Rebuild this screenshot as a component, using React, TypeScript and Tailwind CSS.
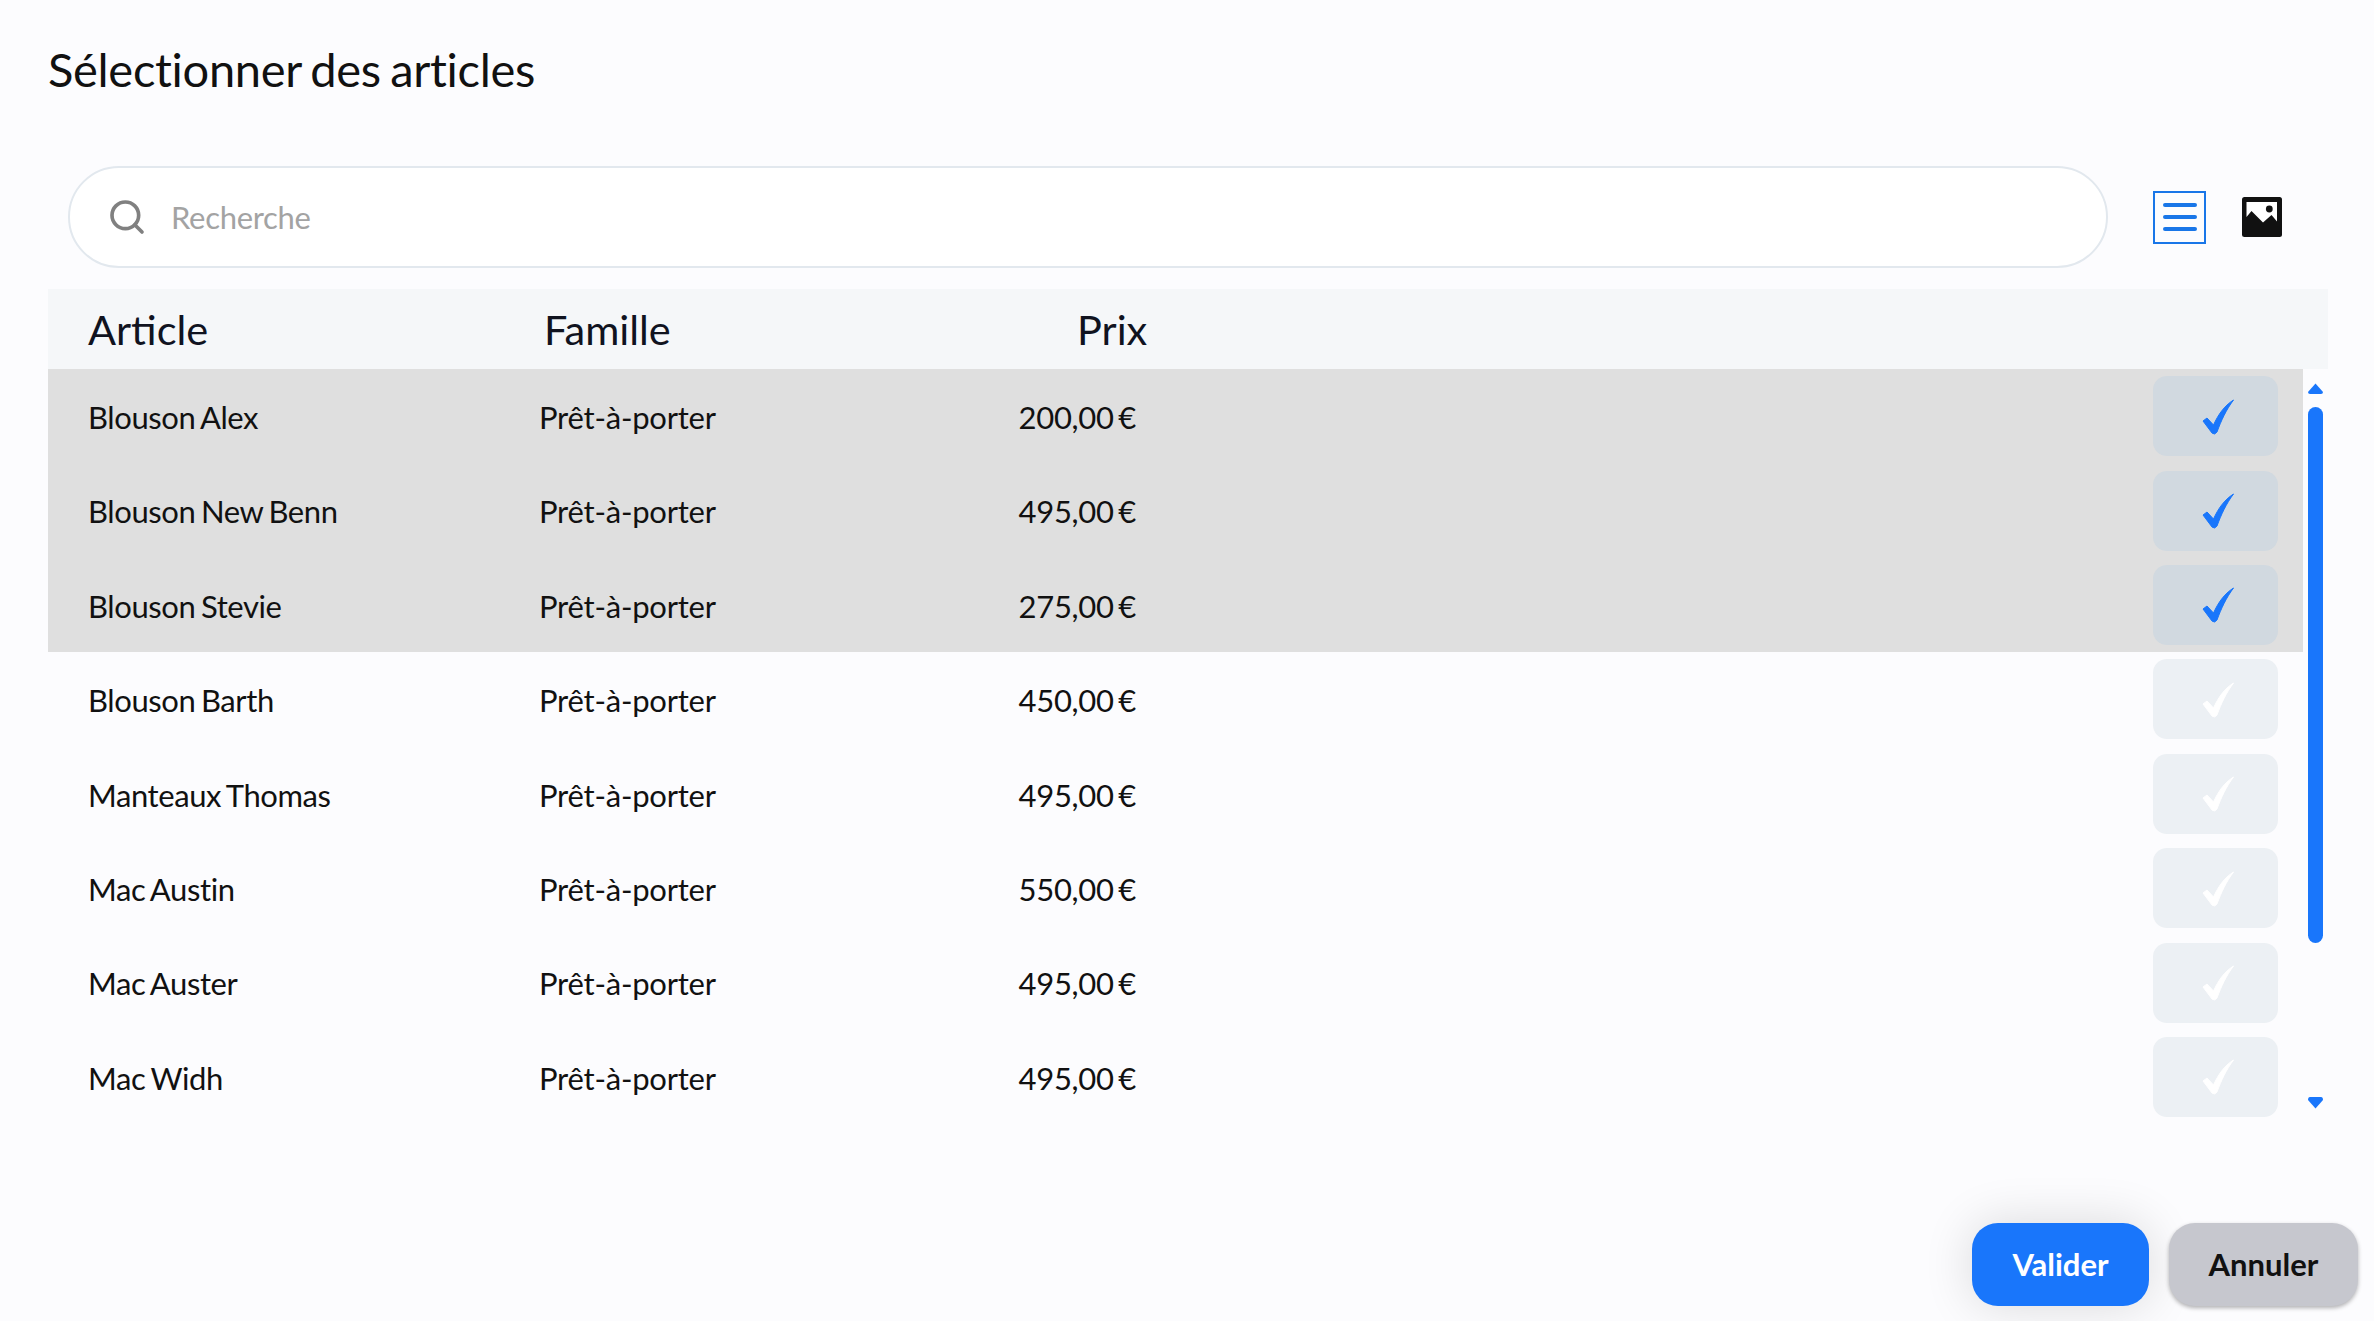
import { Search } from 'lucide-react'

const rows = [
  { name: 'Blouson Alex', price: '200,00 €', selected: true },
  { name: 'Blouson New Benn', price: '495,00 €', selected: true },
  { name: 'Blouson Stevie', price: '275,00 €', selected: true },
  { name: 'Blouson Barth', price: '450,00 €', selected: false },
  { name: 'Manteaux Thomas', price: '495,00 €', selected: false },
  { name: 'Mac Austin', price: '550,00 €', selected: false },
  { name: 'Mac Auster', price: '495,00 €', selected: false },
  { name: 'Mac Widh', price: '495,00 €', selected: false },
]

function Check({ color }: { color: string }) {
  return (
    <svg className="ml-[4px] mt-[2px]" width="34" height="37" viewBox="0 0 34 37" fill="none">
      <path d="M2 22 L6 19 L12.5 26 C17 16 23 7 32.5 1 C25 11 20 22 16 33 Q13.5 36.5 11 34 Z" fill={color} stroke={color} strokeWidth="1" strokeLinejoin="round" />
    </svg>
  )
}

function Row({ name, price, selected }: { name: string; price: string; selected: boolean }) {
  return (
    <div className={`flex items-center h-[94.4px] pl-10 pr-[25px] text-[31px] text-[#111] ${selected ? 'bg-[#dfdfdf]' : ''}`}>
      <div className="w-[451px] shrink-0 pt-[2px] tracking-[-0.4px] [word-spacing:-2px]">{name}</div>
      <div className="w-[300px] shrink-0 pt-[2px] tracking-[-0.23px]">Prêt-à-porter</div>
      <div className="w-[297px] shrink-0 text-right pt-[2px] tracking-[-0.3px] [word-spacing:-3px]">{price}</div>
      <div className="flex-1" />
      <div className={`w-[125px] h-[80px] rounded-[14px] flex items-center justify-center ${selected ? 'bg-[#d1d9e0]' : 'bg-[#ecf0f4]'}`}>
        <Check color={selected ? '#1976fb' : '#ffffff'} />
      </div>
    </div>
  )
}

export default function App() {
  return (
    <div className="w-[2374px] h-[1321px] bg-[#fcfcfe] flex flex-col overflow-hidden font-['Lato',sans-serif]">
      <h1 className="pl-12 pt-[40px] h-[166px] text-[47px] leading-[58px] text-[#111] font-normal tracking-[-0.3px] [word-spacing:-2.5px]">Sélectionner des articles</h1>

      <div className="flex items-center pl-[68px]">
        <div className="w-[2040px] h-[102px] bg-white border-2 border-[#e2e8ee] rounded-[51px] flex items-center pl-[37px]">
          <Search size={40} strokeWidth={2.2} className="text-[#808080] shrink-0" />
          <span className="ml-[24px] text-[31px] text-[#a3a3a3] tracking-[-0.3px]">Recherche</span>
        </div>
        <button className="ml-[45px] w-[53px] h-[53px] border-2 border-[#1976e8] flex flex-col items-center justify-center gap-[8.5px]">
          <span className="w-[34px] h-[3.5px] rounded-full bg-[#1976e8]" />
          <span className="w-[34px] h-[3.5px] rounded-full bg-[#1976e8]" />
          <span className="w-[34px] h-[3.5px] rounded-full bg-[#1976e8]" />
        </button>
        <svg className="ml-[36px]" width="40" height="40" viewBox="0 0 40 40">
          <rect width="40" height="40" rx="2.5" fill="#111" />
          <path d="M4.5 5 H35 V24.5 L29.5 18 L21 25.5 L9.5 14 L4.5 20 Z" fill="#fff" />
          <circle cx="27.3" cy="12" r="3.4" fill="#111" />
        </svg>
      </div>

      <div className="mt-[21px] ml-12 w-[2280px]">
        <div className="h-[80px] bg-[#f5f7f9] flex items-center pl-10 text-[41.5px] text-[#10131f]">
          <div className="w-[456px] shrink-0">Article</div>
          <div className="w-[533px] shrink-0">Famille</div>
          <div>Prix</div>
        </div>
        <div className="flex">
          <div className="w-[2255px] shrink-0">
            {rows.map((r) => (
              <Row key={r.name} {...r} />
            ))}
          </div>
          <div className="flex-1 flex flex-col items-center pt-[14px]">
            <svg width="15" height="11" viewBox="0 0 15 11">
              <path d="M7.5 0.5 L15 9 Q15 11 13 11 H2 Q0 11 0 9 Z" fill="#1976fb" />
            </svg>
            <div className="mt-[13px] w-[15px] h-[536px] rounded-full bg-[#1976fb]" />
            <svg className="mt-[154px]" width="15" height="12" viewBox="0 0 15 12">
              <path d="M7.5 11.5 L15 3 Q15 0 13 0 H2 Q0 0 0 3 Z" fill="#1976fb" />
            </svg>
          </div>
        </div>
      </div>

      <div className="mt-[99px] flex justify-end gap-5 pr-4">
        <button className="w-[177px] h-[83px] rounded-[26px] bg-[#1976fb] text-white text-[31px] font-bold shadow-[0_0_50px_rgba(0,0,0,0.14)]">Valider</button>
        <button className="w-[189px] h-[83px] rounded-[26px] bg-[#c6c7ce] text-[#111] text-[31px] font-bold shadow-[0_2px_4px_rgba(0,0,0,0.3)]">Annuler</button>
      </div>
    </div>
  )
}
